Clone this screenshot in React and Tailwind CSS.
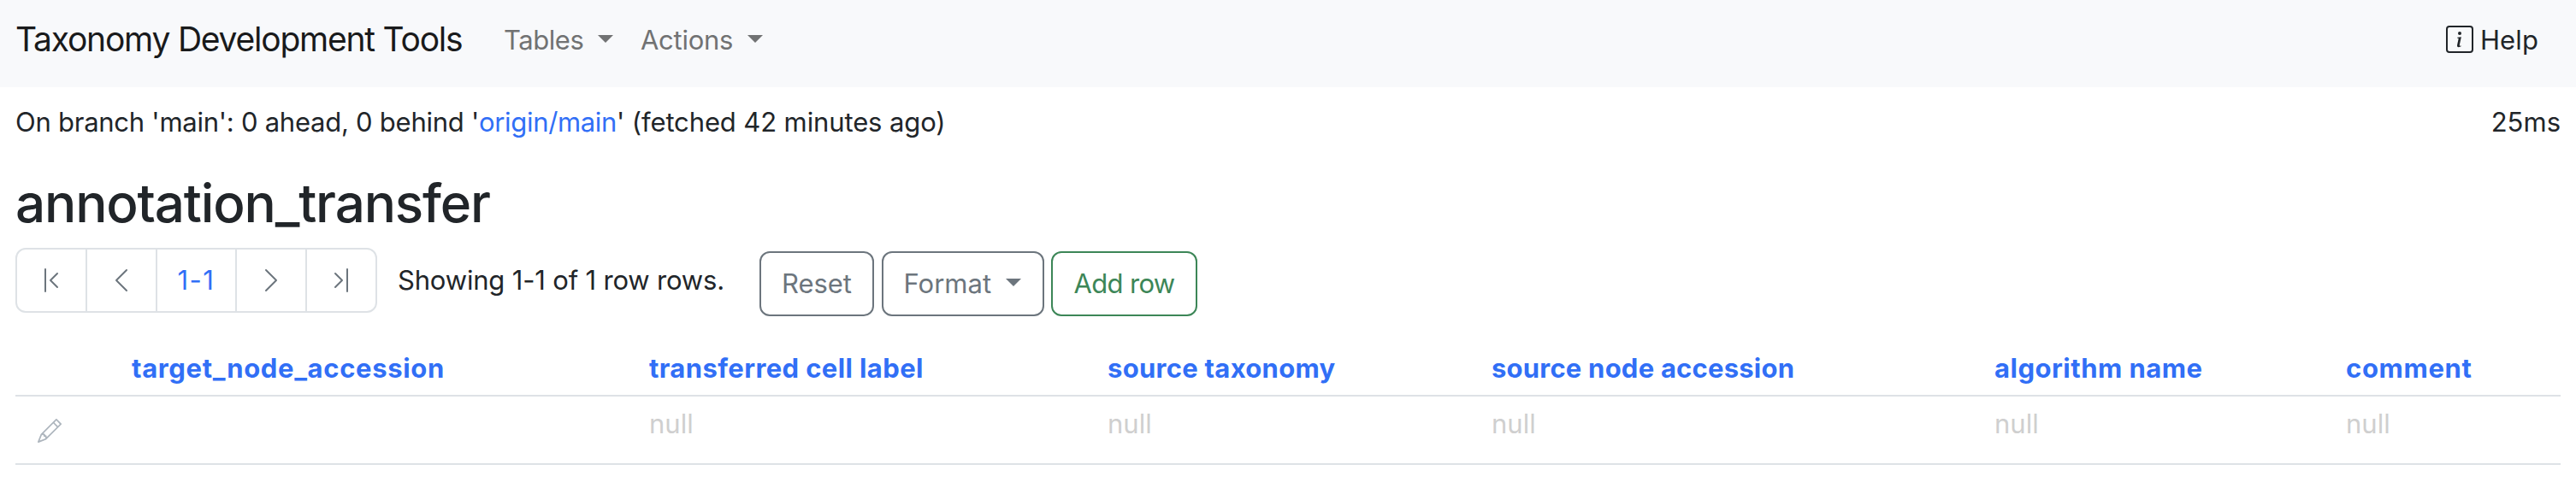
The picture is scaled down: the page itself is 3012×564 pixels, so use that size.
import React from "react";
import {
  BsChevronBarLeft,
  BsChevronBarRight,
  BsChevronLeft,
  BsChevronRight,
  BsInfoSquare,
  BsPencil,
} from "react-icons/bs";

const columns = [
  { name: "target_node_accession", value: "", width: "w-[605px]", tracking: "tracking-[0.663px]" },
  { name: "transferred cell label", value: "null", width: "w-[536px]", tracking: "tracking-[0.397px]" },
  { name: "source taxonomy", value: "null", width: "w-[449px]", tracking: "tracking-[0.283px]" },
  { name: "source node accession", value: "null", width: "w-[588px]", tracking: "tracking-[0.219px]" },
  { name: "algorithm name", value: "null", width: "w-[411px]", tracking: "tracking-[0.493px]" },
  { name: "comment", value: "null", width: "w-[259px]", tracking: "tracking-[0.65px]" },
];

function Caret({ className = "" }) {
  return (
    <svg className={`h-[9px] w-[18px] ${className}`} viewBox="0 0 18 9" fill="currentColor">
      <path d="M0 0h18L9 9z" />
    </svg>
  );
}

function Navbar() {
  return (
    <header className="flex h-[102px] items-center bg-[#f8f9fb] pb-[10px] pl-[18px] pr-[44px]">
      <a className="w-[568px] whitespace-nowrap text-[39px] leading-[60px] tracking-[-1.226px] text-[#191a1b]">
        Taxonomy Development Tools
      </a>
      <nav className="flex grow items-center pt-[2px] text-[#717273]">
        <button className="flex w-[160px] items-center justify-between pl-[3px] pr-[29px]">
          <span className="tracking-[-0.442px]">Tables</span>
          <Caret className="mb-1" />
        </button>
        <button className="flex w-[146px] items-center justify-between pl-[3px]">
          <span className="tracking-[-0.275px]">Actions</span>
          <Caret className="mb-1" />
        </button>
      </nav>
      <a className="flex items-center gap-2">
        <BsInfoSquare className="size-8" />
        <span className="pt-[2px] tracking-[0.127px]">Help</span>
      </a>
    </header>
  );
}

function StatusLine() {
  return (
    <div className="flex justify-between whitespace-pre pt-[17px]">
      <p>
        <span className="tracking-[-0.253px]">{"On branch 'main': 0 ahead, 0 behind '"}</span>
        <a className="tracking-[-0.333px] text-[#316ff6]">origin/main</a>
        <span className="tracking-[-0.12px]">{"' (fetched 42 minutes ago)"}</span>
      </p>
      <p>25ms</p>
    </div>
  );
}

function Pager() {
  return (
    <div className="flex h-[76px] divide-x-2 divide-[#dee2e6] rounded-[12px] border-2 border-[#dee2e6] text-[#6c757d]">
      <button className="flex w-[82px] items-center justify-center">
        <BsChevronBarLeft className="size-8" />
      </button>
      <button className="flex w-[82px] items-center justify-center">
        <BsChevronLeft className="size-8" />
      </button>
      <button className="flex w-[93px] items-center justify-center tracking-[1.5px] text-[#316ff6]">
        1-1
      </button>
      <button className="flex w-[82px] items-center justify-center">
        <BsChevronRight className="size-8" />
      </button>
      <button className="flex w-[80px] items-center justify-center">
        <BsChevronBarRight className="size-8" />
      </button>
    </div>
  );
}

function Toolbar() {
  return (
    <div className="flex h-[80px] whitespace-nowrap">
      <Pager />
      <p className="w-[447px] pl-[24px] pt-[14px] tracking-[-0.178px]">Showing 1-1 of 1 row rows.</p>
      <div className="flex items-end text-[#6c757d]">
        <button className="mr-[9px] h-[76px] w-[134px] rounded-[12px] border-2 border-[#6c757d] tracking-[-0.076px]">
          Reset
        </button>
        <button className="mr-2 flex h-[76px] w-[190px] items-center justify-between rounded-[12px] border-2 border-[#6c757d] pl-[23.5px] pr-[25px]">
          Format
          <Caret className="mb-1" />
        </button>
        <button className="h-[76px] w-[171px] rounded-[12px] border-2 border-[#3c8657] tracking-[-0.626px] text-[#3c8657]">
          Add row
        </button>
      </div>
    </div>
  );
}

function DataTable() {
  return (
    <table className="mt-[30px] w-[2976px] table-fixed border-separate border-spacing-0 text-left">
      <thead>
        <tr className="h-[64px]">
          <th className="w-[128px] border-b-2 border-[#dee2e6]" />
          {columns.map((c) => (
            <th
              key={c.name}
              className={`${c.width} ${c.tracking} border-b-2 border-[#dee2e6] p-0 pl-2 pt-[7px] align-top font-bold text-[#316ff6]`}
            >
              {c.name}
            </th>
          ))}
        </tr>
      </thead>
      <tbody>
        <tr className="h-[80px] align-top">
          <td className="border-b-2 border-[#dee2e6] p-0 pl-[26px] pt-[26px]">
            <BsPencil className="size-7 text-[#adb5bd]" />
          </td>
          {columns.map((c) => (
            <td key={c.name} className="border-b-2 border-[#dee2e6] p-0 pl-2 pt-2 text-[#cfcfcf]">
              {c.value}
            </td>
          ))}
        </tr>
      </tbody>
    </table>
  );
}

export default function App() {
  return (
    <div className="h-[564px] w-[3012px] overflow-hidden bg-white font-['Inter',sans-serif] text-[31px] leading-[48px] text-[#212529]">
      <Navbar />
      <main className="px-[18px]">
        <StatusLine />
        <h1 className="mb-[14px] mt-8 text-[62px] font-medium leading-[77px] tracking-[-1.167px]">
          annotation_transfer
        </h1>
        <Toolbar />
        <DataTable />
      </main>
    </div>
  );
}
